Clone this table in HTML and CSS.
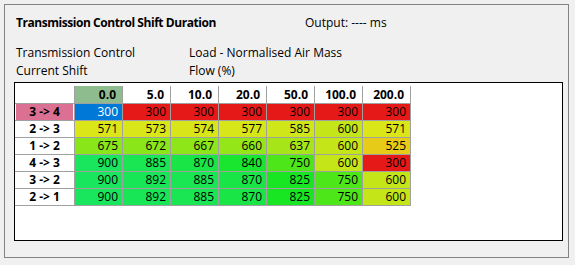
FILE: index.html
```html
<!DOCTYPE html>
<html>
<head>
<meta charset="utf-8">
<link rel="stylesheet" href="styles.css">
</head>
<body>
<div class="panel">
  <div class="top">
    <div class="title">Transmission Control Shift Duration</div>
    <div class="output">Output: ---- ms</div>
  </div>
  <div class="axes">
    <div class="axis-col">
      <div>Transmission Control</div>
      <div>Current Shift</div>
    </div>
    <div class="axis-col">
      <div>Load - Normalised Air Mass</div>
      <div>Flow (%)</div>
    </div>
  </div>
  <div class="box">
    <table class="grid">
      <thead>
        <tr>
          <th class="corner"><div class="hc"></div></th>
          <th><div class="hc sel">0.0</div></th>
          <th><div class="hc">5.0</div></th>
          <th><div class="hc">10.0</div></th>
          <th><div class="hc">20.0</div></th>
          <th><div class="hc">50.0</div></th>
          <th><div class="hc">100.0</div></th>
          <th><div class="hc">200.0</div></th>
        </tr>
      </thead>
      <tbody>
        <tr>
          <td class="rh active">3 -&gt; 4</td>
          <td class="cur">300</td>
          <td style="background:hsl(0,80%,50%)">300</td>
          <td style="background:hsl(0,80%,50%)">300</td>
          <td style="background:hsl(0,80%,50%)">300</td>
          <td style="background:hsl(0,80%,50%)">300</td>
          <td style="background:hsl(0,80%,50%)">300</td>
          <td style="background:hsl(0,80%,50%)">300</td>
        </tr>
        <tr>
          <td class="rh">2 -&gt; 3</td>
          <td style="background:hsl(63.2,80%,50%)">571</td>
          <td style="background:hsl(63.7,80%,50%)">573</td>
          <td style="background:hsl(63.9,80%,50%)">574</td>
          <td style="background:hsl(64.6,80%,50%)">577</td>
          <td style="background:hsl(66.5,80%,50%)">585</td>
          <td style="background:hsl(70,80%,50%)">600</td>
          <td style="background:hsl(63.2,80%,50%)">571</td>
        </tr>
        <tr>
          <td class="rh">1 -&gt; 2</td>
          <td style="background:hsl(87.5,80%,50%)">675</td>
          <td style="background:hsl(86.8,80%,50%)">672</td>
          <td style="background:hsl(85.6,80%,50%)">667</td>
          <td style="background:hsl(84,80%,50%)">660</td>
          <td style="background:hsl(78.6,80%,50%)">637</td>
          <td style="background:hsl(70,80%,50%)">600</td>
          <td style="background:hsl(52.5,80%,50%)">525</td>
        </tr>
        <tr>
          <td class="rh">4 -&gt; 3</td>
          <td style="background:hsl(140,80%,50%)">900</td>
          <td style="background:hsl(136.5,80%,50%)">885</td>
          <td style="background:hsl(133,80%,50%)">870</td>
          <td style="background:hsl(126,80%,50%)">840</td>
          <td style="background:hsl(105,80%,50%)">750</td>
          <td style="background:hsl(70,80%,50%)">600</td>
          <td style="background:hsl(0,80%,50%)">300</td>
        </tr>
        <tr>
          <td class="rh">3 -&gt; 2</td>
          <td style="background:hsl(140,80%,50%)">900</td>
          <td style="background:hsl(138.1,80%,50%)">892</td>
          <td style="background:hsl(136.5,80%,50%)">885</td>
          <td style="background:hsl(133,80%,50%)">870</td>
          <td style="background:hsl(122.5,80%,50%)">825</td>
          <td style="background:hsl(105,80%,50%)">750</td>
          <td style="background:hsl(70,80%,50%)">600</td>
        </tr>
        <tr>
          <td class="rh">2 -&gt; 1</td>
          <td style="background:hsl(140,80%,50%)">900</td>
          <td style="background:hsl(138.1,80%,50%)">892</td>
          <td style="background:hsl(136.5,80%,50%)">885</td>
          <td style="background:hsl(133,80%,50%)">870</td>
          <td style="background:hsl(122.5,80%,50%)">825</td>
          <td style="background:hsl(105,80%,50%)">750</td>
          <td style="background:hsl(70,80%,50%)">600</td>
        </tr>
      </tbody>
    </table>
  </div>
</div>
</body>
</html>
```

FILE: styles.css
```css
html, body {
  margin: 0;
  padding: 0;
  background: #f0f0f0;
}
body {
  padding: 4px 6px 0 4px;
  font-family: "Open Sans", "Noto Sans", sans-serif;
  font-size: 12px;
  color: #000;
}
.panel {
  border: 1px solid #828282;
  width: 565px;
  height: 254px;
  box-sizing: border-box;
  padding: 9px 5px 0 9px;
  display: flex;
  flex-direction: column;
}
.top {
  display: flex;
  align-items: center;
  height: 18px;
  line-height: 18px;
  padding-left: 2px;
}
.title {
  font-weight: bold;
  letter-spacing: -0.45px;
  width: 289px;
}
.output {
  white-space: nowrap;
}
.axes {
  display: flex;
  margin-top: 12px;
  padding-left: 2px;
  line-height: 18px;
}
.axis-col:first-child {
  width: 173px;
}
.box {
  margin-top: 2px;
  height: 159px;
  box-sizing: border-box;
  border: 1px solid #000;
  background: #fff;
}
.grid {
  border-collapse: separate;
  border-spacing: 0;
  table-layout: fixed;
}
.grid th {
  padding: 0;
  height: 20px;
  width: 48px;
  border-bottom: 1px solid #a0a0a0;
  vertical-align: top;
}
.grid th.corner {
  width: 60px;
}
.hc {
  margin-top: 3px;
  height: 17px;
  line-height: 17px;
  border-right: 1px solid #a0a0a0;
  text-align: right;
  padding-right: 6px;
  font-weight: bold;
  box-sizing: border-box;
}
.hc.sel {
  background: #8fbc8f;
}
.grid td {
  padding: 0 4px 0 0;
  height: 16px;
  line-height: 16px;
  border-right: 1px solid #a0a0a0;
  border-bottom: 1px solid #a0a0a0;
  text-align: right;
  white-space: nowrap;
}
.grid td.rh {
  background: #fff;
  text-align: center;
  font-weight: bold;
  padding: 0;
}
.grid td.rh.active {
  background: #db7093;
  box-shadow: inset 1px 0 0 #fff, inset -1px 0 0 #fff;
}
.grid td.cur {
  background: #0078d7;
  color: #fff;
}
```
